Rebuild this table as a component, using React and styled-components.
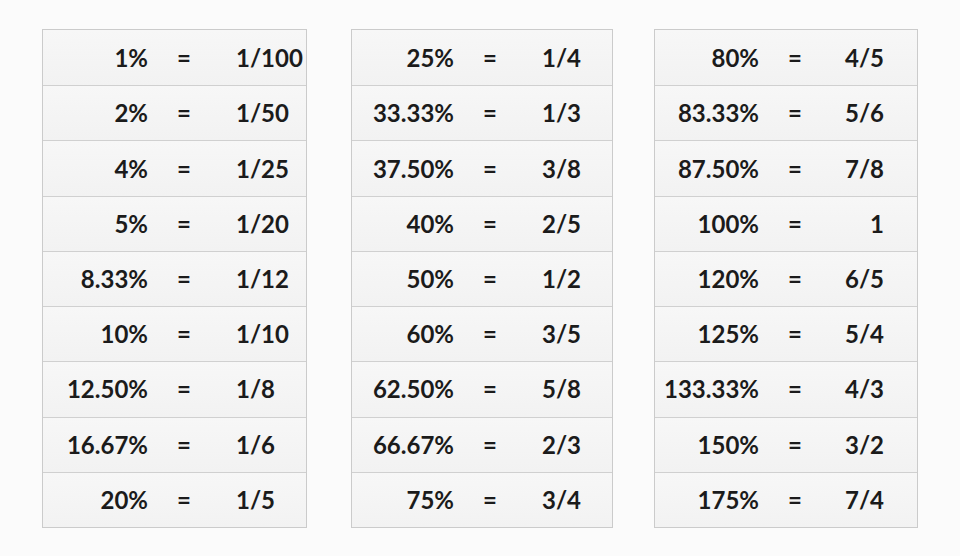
import React from 'react'
import styled, { createGlobalStyle } from 'styled-components'

const Global = createGlobalStyle`
    html, body {
        margin: 0;
        padding: 0;
        background: #fbfbfb;
    }
    body {
        font-family: Lato, "Open Sans", "Liberation Sans", sans-serif;
    }
`;

const Page = styled.div`
    width: 960px;
    height: 556px;
    box-sizing: border-box;
    padding: 29px 0 0 42px;
    display: flex;
    align-items: flex-start;
`;

const Table = styled.div`
    width: ${p => p.$width}px;
    margin-right: ${p => p.$gap}px;
    height: 499px;
    box-sizing: border-box;
    display: grid;
    grid-template-rows: repeat(9, 1fr);
    border: 1px solid #cbcbcb;
    background: #f5f5f5;
`;

const Row = styled.div`
    display: grid;
    grid-template-columns: ${p => p.$pct}px 72px 1fr;
    align-items: center;
    border-top: 1px solid #d0d0d0;
    &:first-child {
        border-top: none;
    }
    background: linear-gradient(#f7f7f7, #f2f2f2);
    color: #1b1b1b;
    font-size: 24px;
    font-weight: 700;
    line-height: 1;
`;

const Percent = styled.span`
    text-align: right;
`;

const Equals = styled.span`
    text-align: center;
`;

const Fraction = styled.span`
    text-align: ${p => p.$align};
    padding: ${p => (p.$align === 'right' ? '0 33px 0 0' : '0 0 0 16px')};
`;

const tables = [
    {
        width: 265,
        gap: 44,
        pct: 105,
        align: 'left',
        rows: [
            ['1%', '1/100'], ['2%', '1/50'], ['4%', '1/25'], ['5%', '1/20'],
            ['8.33%', '1/12'], ['10%', '1/10'], ['12.50%', '1/8'], ['16.67%', '1/6'], ['20%', '1/5'],
        ],
    },
    {
        width: 262,
        gap: 41,
        pct: 102,
        align: 'left',
        rows: [
            ['25%', '1/4'], ['33.33%', '1/3'], ['37.50%', '3/8'], ['40%', '2/5'],
            ['50%', '1/2'], ['60%', '3/5'], ['62.50%', '5/8'], ['66.67%', '2/3'], ['75%', '3/4'],
        ],
    },
    {
        width: 264,
        gap: 0,
        pct: 104,
        align: 'right',
        rows: [
            ['80%', '4/5'], ['83.33%', '5/6'], ['87.50%', '7/8'], ['100%', '1'],
            ['120%', '6/5'], ['125%', '5/4'], ['133.33%', '4/3'], ['150%', '3/2'], ['175%', '7/4'],
        ],
    },
];

export default function App() {
    return (
        <>
            <Global />
            <Page>
                {tables.map((t, i) => (
                    <Table key={i} $width={t.width} $gap={t.gap}>
                        {t.rows.map(([pct, frac]) => (
                            <Row key={pct} $pct={t.pct}>
                                <Percent>{pct}</Percent>
                                <Equals>=</Equals>
                                <Fraction $align={t.align}>{frac}</Fraction>
                            </Row>
                        ))}
                    </Table>
                ))}
            </Page>
        </>
    )
}
